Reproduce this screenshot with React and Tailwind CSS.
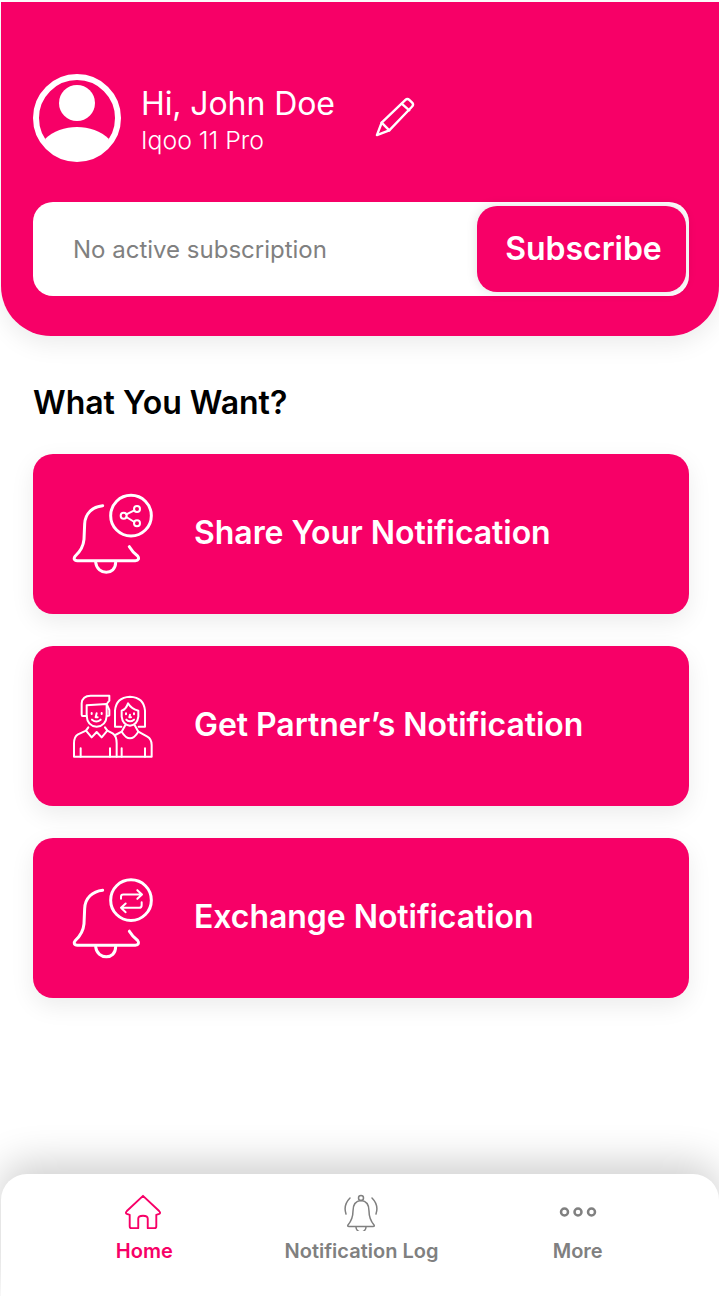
import React from 'react';

function ShareBell() {
  return (
    <svg width="120" height="110" viewBox="0 -3 360 330" fill="none" stroke="white" strokeLinecap="round" strokeLinejoin="round" className="shrink-0">
      <g strokeWidth="9">
        <path d="M158 77C128 80 105 100 104 132L102 178C100 200 90 215 76 228C70 235 72 242 82 242L256 242C266 242 268 235 263 228C252 220 244 210 238 200" />
        <path d="M137 247C142 287 197 287 197 247" />
        <circle cx="243" cy="107" r="61" />
      </g>
      <g strokeWidth="6">
        <circle cx="221" cy="107" r="9" />
        <circle cx="261" cy="87" r="9" />
        <circle cx="261" cy="130" r="9" />
        <path d="M229 103L253 91M229 111L253 126" />
      </g>
    </svg>
  );
}

function ExchangeBell() {
  return (
    <svg width="120" height="106" viewBox="0 -1.5 360 318" fill="none" stroke="white" strokeLinecap="round" strokeLinejoin="round" className="shrink-0">
      <g strokeWidth="9">
        <path d="M158 74C128 77 105 97 104 129L102 175C100 197 90 212 76 225C70 232 72 239 82 239L256 239C266 239 268 232 263 225C252 217 244 207 238 197" />
        <path d="M137 244C142 284 197 284 197 244" />
        <circle cx="243" cy="104" r="61" />
      </g>
      <path strokeWidth="6" d="M213 100L213 94Q213 87 220 87L275 87M262 74L276 87L262 100M275 110L275 119Q275 127 267 127L213 127M227 114L213 127L227 140" />
    </svg>
  );
}

function Partners() {
  return (
    <svg width="120" height="90" viewBox="0 3 360 270" fill="none" stroke="white" strokeWidth="6" strokeLinecap="round" strokeLinejoin="round" className="shrink-0">
      {/* man */}
      <path d="M110 108L98 108Q95 108 95 104L95 70Q97 47 122 47L178 47L178 62L170 72L178 90L178 106Q178 108 170 108" />
      <path d="M110 92L110 76L170 72L170 108Q168 138 140 140Q112 138 110 108L110 92" />
      <path d="M125 99L125 102M155 99L155 102M140 100L137 112L143 112M126 119Q139 130 152 119" />
      <path d="M115 142L108 152L125 172L140 156L155 172L172 152L165 142" />
      <path d="M108 152L84 163Q72 170 72 190L72 230L305 230L305 195Q305 177 292 170L265 155" />
      <path d="M172 152L188 160Q200 168 200 190L200 230M92 205L92 230M180 205L180 230M285 205L285 230M215 205L215 230" />
      {/* woman */}
      <path d="M214 140L195 140L195 92Q198 52 240 50Q282 52 285 92L285 140L266 140" />
      <path d="M215 92L215 110Q218 135 240 137Q262 135 265 110L265 92Q245 88 234 70Q228 88 215 92Z" />
      <path d="M228 100L228 103M252 100L252 103M240 104L238 112L243 112M229 119Q240 129 252 119" />
      <path d="M215 155Q240 195 265 155M225 137L215 155L196 165M255 137L265 155" />
    </svg>
  );
}

function ActionCard({ icon, label }) {
  return (
    <div className="h-40 rounded-[20px] bg-[#f70067] flex items-center pl-[17px] shadow-[0_8px_24px_rgba(0,0,0,0.08)]">
      {icon}
      <span className="ml-[24px] -mt-[2px] text-[32px] font-semibold tracking-[-0.05px] text-white">{label}</span>
    </div>
  );
}

export default function App() {
  return (
    <div className="w-[719px] h-[1296px] bg-white pt-[2px] flex flex-col overflow-hidden" style={{ fontFamily: 'Inter, sans-serif' }}>
      {/* Header */}
      <div className="ml-[1px] h-[334px] rounded-b-[50px] bg-[#f70067] pl-[32px] pr-[30px] pt-[72px] shadow-[0_8px_24px_rgba(0,0,0,0.08)]">
        <div className="flex items-center h-[88px]">
          <svg width="88" height="88" viewBox="0 0 88 88" fill="none" className="shrink-0">
            <circle cx="44" cy="44" r="41" stroke="white" strokeWidth="6" />
            <circle cx="44" cy="29" r="18" fill="white" />
            <path d="M12 65C20 57 32 53 44 53C56 53 68 57 76 65C68 80 56 86 44 86C32 86 20 80 12 65Z" fill="white" />
          </svg>
          <div className="ml-[20px] mt-[3px] flex flex-col text-white">
            <span className="text-[32px] leading-[38px] tracking-[-0.1px]">Hi, John Doe</span>
            <span className="mt-[3px] text-[24.8px] font-light leading-[29px]">Iqoo 11 Pro</span>
          </div>
          <svg width="40" height="42" viewBox="0 0 42 42" fill="none" stroke="white" strokeWidth="2.5" strokeLinejoin="round" strokeLinecap="round" className="ml-[40px] -mt-[2px] shrink-0">
            <path d="M2 40L7 27L32 3Q34 1 36 3L39 6Q41 8 39 10L15 35Z" />
            <path d="M7 27L15 35M28 7L36 14" />
          </svg>
        </div>
        <div className="mt-[40px] h-[94px] rounded-[20px] bg-white flex items-center justify-between pl-[40px] pr-[3px]">
          <span className="mt-[2px] text-[24px] text-[#808080]">No active subscription</span>
          <button className="w-[209px] h-[86px] rounded-[20px] bg-[#f70067] pl-[4px] text-[32px] font-semibold tracking-[-0.05px] text-white shadow-[0_0_12px_rgba(0,0,0,0.12)]">
            Subscribe
          </button>
        </div>
      </div>

      {/* Actions */}
      <div className="pl-[33px] pr-[30px]">
        <h2 className="mt-[47px] text-[32px] leading-[39px] font-semibold text-black">What You Want?</h2>
        <div className="mt-[32px] flex flex-col gap-8">
          <ActionCard icon={<ShareBell />} label="Share Your Notification" />
          <ActionCard icon={<Partners />} label="Get Partner’s Notification" />
          <ActionCard icon={<ExchangeBell />} label="Exchange Notification" />
        </div>
      </div>

      {/* Bottom nav */}
      <div className="mt-auto ml-[1px] h-[122px] rounded-t-[26px] bg-white shadow-[0_-10px_40px_rgba(0,0,0,0.2)] grid grid-cols-3 pl-[35px] pr-[33px] pt-[19px]">
        <div className="flex flex-col items-center text-[#f70067]">
          <svg width="38" height="38" viewBox="0 0 40 38" fill="none" stroke="currentColor" strokeWidth="2" strokeLinejoin="round" className="h-[38px] -ml-[2px]">
            <path d="M20 2L3 18Q1 20 3 21L6 22L6 34Q6 36 8 36L15 36L15 26Q15 23 20 23Q25 23 25 26L25 36L32 36Q34 36 34 34L34 22L37 21Q39 20 37 18Z" />
          </svg>
          <span className="mt-[5px] text-[20px] font-semibold">Home</span>
        </div>
        <div className="flex flex-col items-center text-[#808080]">
          <svg width="36" height="38" viewBox="0 0 36 38" fill="none" stroke="currentColor" strokeWidth="1.5" strokeLinecap="round" strokeLinejoin="round" className="h-[38px]">
            <circle cx="18" cy="5" r="2.5" />
            <path d="M5 32Q10 26 10 18Q10 8 18 7.5Q26 8 26 18Q26 26 31 32Q32 33.5 30 33.5L6 33.5Q4 33.5 5 32Z" />
            <path d="M13 34A5 5 0 0 0 23 34M7 5Q0 12 3 21M29 5Q36 12 33 21" />
          </svg>
          <span className="mt-[5px] ml-[1px] text-[20px] font-semibold">Notification Log</span>
        </div>
        <div className="flex flex-col items-center text-[#808080]">
          <svg width="38" height="38" viewBox="0 0 38 38" fill="none" stroke="currentColor" strokeWidth="2.5" className="ml-[1px]">
            <circle cx="5.5" cy="19" r="3.5" />
            <circle cx="19" cy="19" r="3.5" />
            <circle cx="32.5" cy="19" r="3.5" />
          </svg>
          <span className="mt-[5px] text-[20px] font-semibold">More</span>
        </div>
      </div>
    </div>
  );
}
